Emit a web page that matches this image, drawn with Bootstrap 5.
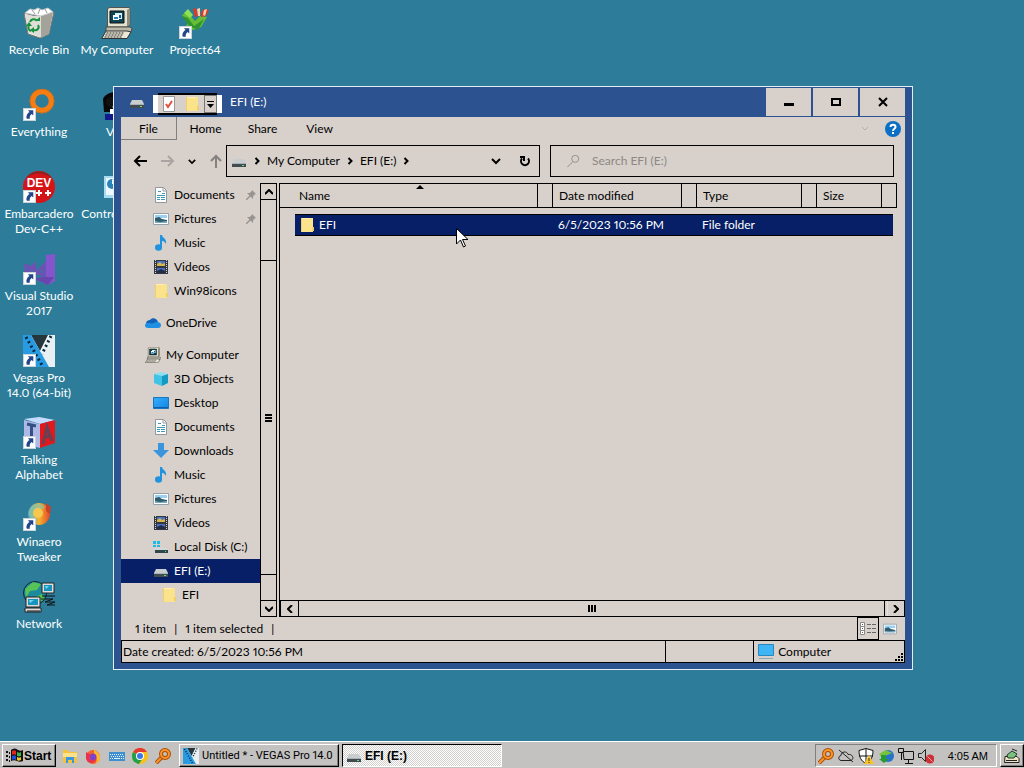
<!DOCTYPE html>
<html lang="en">
<head>
<meta charset="utf-8">
<meta name="viewport" content="width=device-width, initial-scale=1">
<title>EFI (E:)</title>
<link href="https://cdn.jsdelivr.net/npm/bootstrap@5.3.0/dist/css/bootstrap.min.css" rel="stylesheet">
<style>
:root{--face:#d7d0cb;--frame:#2d5290;--sel:#071f67;--ui:Lato,"Open Sans",sans-serif;--bar:"Liberation Sans",Arial,sans-serif}
body{font-family:var(--ui);font-size:12px;line-height:16px;font-variant-numeric:proportional-nums;color:#000;background:#2d7d9a}
svg{display:block;flex:none}
button,input{font:inherit;color:inherit;border-radius:0}
button{background:none;border:0;padding:0}
a{color:inherit;text-decoration:none}
.i16{width:16px;height:16px}.i32{width:32px;height:32px}
.desk-col{width:78px}
.desk-item{height:82px;padding-top:7px;color:#fff;line-height:15px}
.desk-item span{margin-top:3px;white-space:nowrap}
.explorer{left:113px;right:111px;top:86px;bottom:98px;background:var(--frame);border:1px solid #e3eef3;padding:0 7px 6px}
.desk{height:100vh}
.title-row{height:30px;color:#fff}
.caps{gap:2px;padding-top:1px}
.quick{background:linear-gradient(#fff,#fff) center/100% 18px no-repeat;padding:0 5px;margin-left:8px}
.quick-in{height:22px;background:#000;padding:2px 0;color:#000}
.quick-in button{height:18px;background:var(--face)}
.quick-in .drop{border:1px solid #777;width:13px}
.cap{height:28px;width:45px;background:var(--face);color:#000}
.face{background:var(--face)}
.tabs{height:24px}
.tabs>button{height:24px;width:57px}
.tabs>.file{height:23px;width:56px;padding-top:1px;border:solid #808080;border-width:0 1px 1px 0}
.boxed{border:1px solid #000;height:32px}
.nav-row{padding:4px 11px 6px 0}
.steps{width:105px}
.addr{flex:304 1 0;gap:6px}.find{flex:326 1 0;margin-left:10px}
.find input{background:none;border:0;outline:0;padding:0;min-width:0}
.find input::placeholder{color:#8d8885;opacity:1}
.pane{width:139px;flex:none;overflow:hidden}
.pane a{height:24px;gap:5px;padding-left:32px;white-space:nowrap}
.pane a.top{padding-left:24px}
.pane a.sub{padding-left:40px}
.pane a.on,.files tbody .on td{background:var(--sel);color:#fff}
.vbar{width:17px;flex:none;border:1px solid #000}
.vbar button{height:16px}
.vthumb{margin-top:60px;margin-bottom:25px;border:solid #000;border-width:1px 0}
.vbar .up{border-bottom:1px solid #000}.vbar .down{border-top:1px solid #000}
.listing{border-left:1px solid #000;margin-left:2px}
.files{table-layout:fixed;border-collapse:separate;border-spacing:0}
.files th{height:25px;font-weight:400;padding:0 0 0 6px;border:solid #000;border-width:1px 0}
.files th.g,.files th.l{border-left-width:1px}
.files th.e{border-right-width:1px;padding:0}
.files .air td{height:6px;padding:0}
.files .on td{height:22px;padding:0 0 0 6px;border:solid #000;border-width:1px 0}
.files tbody tr.on td.bare{background:none;border:0;padding:0}
.hbar{height:17px;border:1px solid #000}
.hbar button{width:17px}
.hthumb{border:solid #000;border-width:0 1px;margin-right:2px}
.status{height:23px;padding-left:14px}
.view{width:22px;height:23px}.view.on{border:1px solid #000}
.foot{height:23px;border:1px solid #000}
.foot>div{border-left:1px solid #000}
.foot>div:first-child{border:0;padding-left:1px}
.taskbar{height:27px;background:#c3c2c1;border-top:1px solid #fff;font-family:var(--bar);font-size:11px;padding:2px 0 1px 2px}
.raised{border:1px solid;border-color:#fff #000 #000 #fff;box-shadow:inset -1px -1px #808080}
.sunk{border:1px solid;border-color:#808080 #fff #fff #808080}
.start{width:54px;font-size:12px;padding-left:3px;gap:1px}
.launch{width:117px;margin-left:2px}
.task{width:160px;gap:3px;padding-left:3px;white-space:nowrap;overflow:hidden}
.task span{font-family:Roboto,var(--bar)}
.task.active{margin-left:3px;border:1px solid;border-color:#000 #fff #fff #000;background:repeating-conic-gradient(#fff 0 25%,#d0cfce 0 50%) 0 0/2px 2px;font-size:12px}
.tray{width:182px;gap:4px;padding-left:2px}
.show-desk{width:24px;margin-left:3px}
.pointer{left:456px;top:228px}
</style>
</head>
<body>
<svg width="0" height="0" class="position-absolute" aria-hidden="true">
<defs>
<linearGradient id="gs" x1="0" y1="0" x2="1" y2="1"><stop offset="0" stop-color="#31b0ff"/><stop offset="1" stop-color="#1684e0"/></linearGradient>
<linearGradient id="gw" x1="0" y1="0" x2="1" y2="0"><stop offset="0" stop-color="#42a5d8"/><stop offset=".5" stop-color="#f5b52c"/><stop offset="1" stop-color="#e2452a"/></linearGradient>
<symbol id="link" viewBox="0 0 12 12"><path fill="#fff" stroke="#c9d3da" d="M.5.5h11v11H.5z"/><path fill="#23458c" d="M4.500 2h5v5L8 5.500C6.500 6.500 6 8 6.300 10H3.500C2.500 7.500 4 5 6 3.700z"/></symbol>
<symbol id="bin" viewBox="0 0 32 32"><path fill="#efefea" stroke="#77776f" d="M1 6l10 3 20-4-5 22-9 4-12-4z"/><path fill="#a3a29b" d="M18 9l12-4-4 22-8 4z"/><path fill="#deded8" d="M2 7l9 2 7 0 0 21-12-4z"/><path fill="#fff" stroke="#c5c5c5" d="M2 6l5-4 4 1 4-2 4 2 6-2 5 4-12 4z"/><path d="M9 3l3 4M17 2l-2 5M22 2l2 4" stroke="#999"/><path fill="none" stroke="#16913a" stroke-width="2" d="M7 15c1-3 5-4 7-1M15 18c2 3-1 6-4 5M8 24c-3-1-3-4-2-6"/><path fill="#16913a" d="M12 14h5v-4zM11 20v6l-4-3zM3 19l3-4 3 4z"/></symbol>
<symbol id="pc" viewBox="0 0 32 32"><path fill="#e6e2d2" stroke="#56544c" d="M6.500 1.500L9 .5h19l1 2v15l-3 2.500H6.500z"/><path fill="#8f8c7e" d="M26 3l3-2v16l-3 3z"/><path fill="#0b4554" stroke="#111" d="M9 4h14v12H9z"/><path fill="#d6f2f2" d="M14 6h7v6h-7z"/><path fill="#1a5f9d" d="M15 8h5v3h-5z"/><path fill="#fff" d="M12 8h6v5h-6z"/><path fill="#2c7fbd" d="M13 10h4v2h-4z"/><path fill="#bdb9aa" stroke="#4d4b44" d="M5 20h24l2 1-1 4H5z"/><path fill="#ece8d8" stroke="#333" d="M5 24h21l4 1-4 6.500H.8z"/><path d="M5.500 26h18M4.500 28h18M3.500 30h18" stroke="#222" stroke-dasharray="2 1"/></symbol>
<symbol id="p64" viewBox="0 0 32 32"><path fill="#69bd32" d="M3 8l5-3 8 9 5-5 7 1-6 10-8 3-7-4 2-3z"/><path fill="#2f962f" d="M3 9l6 2 6 8 10-7-6 11-9-4z"/><path fill="#8fe055" d="M5 6l4-4 5 6-3 3z"/><path fill="#dd3a26" d="M14 2l3-1 2 8-3 1zM22 5l3-3 5 1-3 6-5 1z"/><path fill="#f5d3b2" d="M18 2l3-1v8h-2zM25 3l3-1-2 7-2-1z"/></symbol>
<symbol id="ring" viewBox="0 0 32 32"><circle cx="19" cy="12" r="9.500" fill="none" stroke="#f57d12" stroke-width="5.500"/><circle cx="19" cy="12" r="12" fill="none" stroke="#c96d20"/></symbol>
<symbol id="dev" viewBox="0 0 32 32"><circle cx="16" cy="16" r="16" fill="#d41416"/><path d="M3 7A16 16 0 0 1 29 7C20 1 11 1 3 7z" fill="#8e2222"/><path d="M13 22h6M16 19v6M22 22h6M25 19v6" stroke="#fff" stroke-width="2"/><text x="16" y="16" fill="#fff" text-anchor="middle" font-family="Liberation Sans" font-weight="700" font-size="12">DEV</text></symbol>
<symbol id="vs" viewBox="0 0 32 32"><path fill="#8655cd" d="M23 2l9-1v27l-7 4-15-7 13 1z"/><path fill="none" stroke="#7150b6" stroke-width="3" d="M3 11v11l8-10 2 9 8-9v11L3 12"/><path fill="#6946ad" d="M23 24h8l-6 8-15-7z"/></symbol>
<symbol id="vegas" viewBox="0 0 32 32"><path fill="#fff" d="M0 0h32v32H0z"/><path fill="#25363c" d="M8 0h17l-8 16z"/><path fill="#e8f0f3" d="M32 3v29H22l-4-15L26 0h6z"/><path fill="#299be3" d="M0 0h8l18 32H0z"/><path stroke="#06283b" stroke-width="3" stroke-dasharray="2 3" d="M3 2l17 30M28 1l-9 18"/></symbol>
<symbol id="alpha" viewBox="0 0 32 32"><path fill="#c6dcff" d="M1 2l15-2 16 3-15 4z"/><path fill="#aeb9e8" d="M1 3l16 4v24L1 27z"/><path fill="#e1191c" d="M17 7l15-4v23l-15 5z"/><path fill="none" stroke="#345085" stroke-width="3" d="M4 7l9 2M8.500 8v11"/><path fill="none" stroke="#674054" stroke-width="3" d="M20 27l4-17 5 14M22 20l5-1"/></symbol>
<symbol id="win" viewBox="0 0 32 32"><circle cx="16" cy="15" r="11" fill="url(#gw)"/><path fill="#8bc5a6" opacity=".7" d="M6 12c3-9 14-9 16-3-6 1-10 5-12 12-4-3-5-6-4-9z"/><circle cx="15" cy="14" r="5" fill="#f6c850"/><path d="M23 4l5 4-1 7-4-3z" fill="#c8412b"/></symbol>
<symbol id="net" viewBox="0 0 32 32"><circle cx="12" cy="12" r="11.500" fill="#1b8b9d" stroke="#123"/><path fill="#57c255" d="M2 8l8-7 8 2-4 6-7 1-4 7zM12 16l7-3 3 5-7 4z"/><path fill="#ddd" stroke="#222" d="M19 2h12v10H19zM3 16h14v10H3zM2 27h16v4H2z"/><path fill="#1694bd" d="M21 4h8v6h-8zM5 18h10v6H5z"/><path fill="#70d7ea" d="M22 5h4l-3 3zM6 19h5l-4 3z"/><path stroke="#111" d="M19 15h13M18 18h12l-8 3h10l-8 3h8M4 30h13" fill="none"/></symbol>
<symbol id="face" viewBox="0 0 32 32"><path fill="#080808" d="M2 10C6 1 22 1 27 9v14H3z"/><path fill="#fff" d="M9 13l8-6 10 4v10H13z"/><circle cx="10" cy="13" r="5" fill="#111"/><path fill="#101a8a" d="M4 25h12v6H4z"/><path fill="#fff" d="M9 20h6v5H9z"/></symbol>
<symbol id="ctl" viewBox="0 0 32 32"><path fill="#a9dcf3" d="M3 5h27v22H3z"/><path fill="#eefaff" d="M5 7h24v17H5z"/><circle cx="11" cy="13" r="5" fill="#2b84b9"/><path fill="#e9fbff" d="M11 13V8l5 5z"/></symbol>
<symbol id="drive" viewBox="0 0 16 16"><path fill="#c9cdd0" d="M3 6h10l2 4H1z"/><path fill="#444b50" d="M1 10h14v4H1z"/><path fill="#a8b3b7" d="M1 10h14v1H1z"/><path fill="#5fe082" d="M11 12h2v1h-2z"/></symbol>
<symbol id="folder" viewBox="0 0 16 16"><path fill="#fbe38c" d="M2 1h12v14H2z"/><path fill="#f0cf69" d="M2 1h1v14H2zM13 10h2v4h-2z"/><path fill="#ffeeb0" d="M3 1h8v1H3z"/></symbol>
<symbol id="doc" viewBox="0 0 16 16"><path fill="#fff" stroke="#8d999d" d="M2.500.5h8l3 3v12h-11z"/><path d="M5 4.500h3M9 6.500h3M4 8.500h8M4 10.500h3M8 10.500h4M4 12.500h3M8 12.500h4" stroke="#3b9bb9"/><path d="M10 1v3h3" fill="none" stroke="#999"/></symbol>
<symbol id="pic" viewBox="0 0 16 16"><path fill="#fff" stroke="#94a2aa" d="M.5 2.500h15v11H.5z"/><path fill="#9bd1ef" d="M2 4h12v3H2z"/><path fill="#315b6f" d="M2 7l4-1 3 2 5 1v2H2z"/><path fill="#7baabd" d="M2 10l5 1 7-1v2H2z"/></symbol>
<symbol id="music" viewBox="0 0 16 16"><ellipse cx="5.500" cy="12.500" rx="3.500" ry="3.200" fill="#1f93e0"/><path fill="#1f93e0" d="M7 0h2c0 3 5 3 4 9-1-2-2-3-4-3v7H7z"/></symbol>
<symbol id="video" viewBox="0 0 16 16"><path fill="#33373e" d="M1 1h14v14H1z"/><path stroke="#d3d3d3" stroke-dasharray="1 1" d="M2.500 1v14M13.500 1v14"/><path fill="#4873c4" d="M4 2h8v5H4zM4 9h8v5H4z"/><path fill="#d8b74a" d="M4 5l3-2 2 2 3-1v3H4z"/><path fill="#222b48" d="M4 12l4-2 4 2v2H4z"/></symbol>
<symbol id="cloud" viewBox="0 0 16 16"><path fill="#0f62b8" d="M1 9c0-3 2-4 4-4 2-3 7-2 8 2l-3 3z"/><path fill="#1f8fe3" d="M3 13c-4 0-4-5 0-5 3 0 4 1 6 0 3-2 7-.5 7 2 0 2-1 3-3 3z"/></symbol>
<symbol id="cube" viewBox="0 0 16 16"><path fill="#88e0f2" d="M1 3l7-2 7 2-6 2z"/><path fill="#40c3e4" d="M1 3l8 2v10l-8-3z"/><path fill="#149bc4" d="M9 5l6-2v9l-6 3z"/></symbol>
<symbol id="screen" viewBox="0 0 16 16"><path fill="url(#gs)" stroke="#1a76bf" d="M.5 2.500h15v11H.5z"/><path fill="#0e5da8" d="M1 12h14v1H1z"/></symbol>
<symbol id="down" viewBox="0 0 16 16"><path fill="#3a95dd" d="M5 0h6v7h5l-8 8-8-8h5z"/></symbol>
<symbol id="disk" viewBox="0 0 16 16"><path fill="#1dbbe5" d="M0 2h3v3H0zM4 2h3v3H4zM0 6h3v2H0zM4 6h3v2H4z"/><path fill="#d5d8d8" d="M3 9h10l2 2H2z"/><path fill="#30464c" d="M2 11h13v3H2z"/><path fill="#5fe082" d="M12 12h1v1h-1z"/></symbol>
<symbol id="pin" viewBox="0 0 10 10"><path fill="#979390" d="M6 0l4 4-1.500.5-1.500 2V9L4.500 6.500 1 10H0V9l3.500-3.500L1 3h2.500l2-1.500z"/></symbol>
<symbol id="chev" viewBox="0 0 8 8"><path fill="none" stroke="currentColor" stroke-width="2" d="M2.500 1l3 3-3 3"/></symbol>
<symbol id="chevd" viewBox="0 0 10 8"><path fill="none" stroke="currentColor" stroke-width="2" d="M1 2l4 4 4-4"/></symbol>
<symbol id="arrow" viewBox="0 0 14 12"><path fill="none" stroke="currentColor" stroke-width="2" d="M14 6H2M7 1L2 6l5 5"/></symbol>
<symbol id="mag" viewBox="0 0 16 16"><path stroke="#ac4d05" stroke-width="4" d="M7 9l-6 6"/><path stroke="#f8962c" stroke-width="2" d="M7 9l-6 6"/><circle cx="10" cy="6" r="4" fill="none" stroke="#ac4d05" stroke-width="4"/><circle cx="10" cy="6" r="4" fill="none" stroke="#f8962c" stroke-width="2"/></symbol>
</defs>
</svg>

<main class="desk d-flex flex-column position-relative overflow-hidden">
<div class="flex-grow-1 d-flex overflow-hidden">
  <div class="desk-col">
    <a href="#" class="desk-item d-flex flex-column align-items-center text-center"><svg class="i32"><use href="#bin"/></svg><span>Recycle Bin</span></a>
    <a href="#" class="desk-item d-flex flex-column align-items-center text-center"><svg class="i32"><use href="#ring"/><use href="#link" y="19" width="13" height="13"/></svg><span>Everything</span></a>
    <a href="#" class="desk-item d-flex flex-column align-items-center text-center"><svg class="i32"><use href="#dev"/><use href="#link" y="19" width="13" height="13"/></svg><span>Embarcadero<br>Dev-C++</span></a>
    <a href="#" class="desk-item d-flex flex-column align-items-center text-center"><svg class="i32"><use href="#vs"/><use href="#link" y="19" width="13" height="13"/></svg><span>Visual Studio<br>2017</span></a>
    <a href="#" class="desk-item d-flex flex-column align-items-center text-center"><svg class="i32"><use href="#vegas"/><use href="#link" y="19" width="13" height="13"/></svg><span>Vegas Pro<br>14.0 (64-bit)</span></a>
    <a href="#" class="desk-item d-flex flex-column align-items-center text-center"><svg class="i32"><use href="#alpha"/><use href="#link" y="19" width="13" height="13"/></svg><span>Talking<br>Alphabet</span></a>
    <a href="#" class="desk-item d-flex flex-column align-items-center text-center"><svg class="i32"><use href="#win"/><use href="#link" y="19" width="13" height="13"/></svg><span>Winaero<br>Tweaker</span></a>
    <a href="#" class="desk-item d-flex flex-column align-items-center text-center"><svg class="i32"><use href="#net"/></svg><span>Network</span></a>
  </div>
  <div class="desk-col">
    <a href="#" class="desk-item d-flex flex-column align-items-center text-center"><svg class="i32"><use href="#pc"/></svg><span>My Computer</span></a>
    <a href="#" class="desk-item d-flex flex-column align-items-center text-center"><svg class="i32"><use href="#face"/></svg><span>VLC</span></a>
    <a href="#" class="desk-item d-flex flex-column align-items-center text-center"><svg class="i32"><use href="#ctl"/></svg><span>Control Panel</span></a>
  </div>
  <div class="desk-col">
    <a href="#" class="desk-item d-flex flex-column align-items-center text-center"><svg class="i32"><use href="#p64"/><use href="#link" y="19" width="13" height="13"/></svg><span>Project64</span></a>
  </div>
</div>

<section class="explorer position-absolute d-flex flex-column" aria-label="EFI (E:)">
  <header class="title-row d-flex">
    <div class="d-flex align-items-center flex-grow-1 ps-2">
      <svg class="i16"><use href="#drive"/></svg>
      <div class="quick d-flex align-items-center mt-1"><div class="quick-in d-flex">
        <button class="px-1" aria-label="Properties"><svg width="14" height="16" viewBox="0 0 14 16"><path fill="#fff" stroke="#999" d="M1.500.5h11v15h-11z"/><path fill="none" stroke="#e0503c" stroke-width="2" d="M4 8l2 3 4-6"/></svg></button>
        <button class="px-1" aria-label="New folder"><svg class="i16"><use href="#folder"/></svg></button>
        <button class="drop face" aria-label="Customize toolbar"><svg width="11" height="14" viewBox="0 0 11 14"><path d="M2 4h7v1H2zM2 7h7l-3.500 4z"/></svg></button>
      </div></div>
      <span class="ms-2">EFI (E:)</span>
    </div>
    <div class="caps d-flex">
      <button class="cap" aria-label="Minimize"><svg class="mx-auto" width="12" height="12" viewBox="0 0 12 12"><path d="M1 7h10v3H1z"/></svg></button>
      <button class="cap" aria-label="Maximize"><svg class="mx-auto" width="12" height="12" viewBox="0 0 12 12"><path fill="none" stroke="#000" stroke-width="2" d="M2 3h8v6H2z"/></svg></button>
      <button class="cap" aria-label="Close"><svg class="mx-auto" width="12" height="12" viewBox="0 0 12 12"><path stroke="#000" stroke-width="2" d="M2 2l8 8M10 2l-8 8"/></svg></button>
    </div>
  </header>

  <div class="face flex-grow-1 d-flex flex-column overflow-hidden">
    <nav class="tabs d-flex align-items-start">
      <button class="file">File</button><button>Home</button><button>Share</button><button>View</button>
      <div class="ms-auto d-flex align-items-center gap-3 h-100 pe-1">
        <svg width="8" height="6" viewBox="0 0 8 6"><path fill="none" stroke="#b5afab" d="M1 1l3 3 3-3"/></svg>
        <button aria-label="Help"><svg class="i16" viewBox="0 0 16 16"><circle cx="8" cy="8" r="8" fill="#0b6fc6"/><path fill="none" stroke="#fff" stroke-width="2" d="M5.500 6c0-3 5-3 5 0 0 2-2.500 1.500-2.500 4M8 11v2"/></svg></button>
      </div>
    </nav>

    <div class="nav-row d-flex align-items-center">
      <div class="steps d-flex align-items-center justify-content-between ps-2 pe-1">
        <button class="ms-1" aria-label="Back"><svg width="14" height="12"><use href="#arrow"/></svg></button>
        <button aria-label="Forward"><svg width="14" height="12" viewBox="0 0 14 12"><path fill="none" stroke="#aaa5a2" stroke-width="2" d="M0 6h12M7 1l5 5-5 5"/></svg></button>
        <button aria-label="Recent locations"><svg width="8" height="7"><use href="#chevd"/></svg></button>
        <button aria-label="Up"><svg width="12" height="14" viewBox="0 0 12 14"><path fill="none" stroke="#858180" stroke-width="2" d="M6 14V2M1 7l5-5 5 5"/></svg></button>
      </div>
      <div class="addr boxed d-flex align-items-center px-1">
        <svg class="i16"><use href="#drive"/></svg><svg width="8" height="8"><use href="#chev"/></svg>
        <a href="#">My Computer</a><svg width="8" height="8"><use href="#chev"/></svg>
        <a href="#">EFI (E:)</a><svg width="8" height="8"><use href="#chev"/></svg>
        <button class="ms-auto me-2" aria-label="Previous locations"><svg width="10" height="8"><use href="#chevd"/></svg></button>
        <button class="mx-1" aria-label="Refresh"><svg width="12" height="12" viewBox="0 0 12 12"><path fill="none" stroke="#000" stroke-width="2" d="M3 3.500a4 4 0 1 0 6 0M1 2h4v4"/></svg></button>
      </div>
      <label class="find boxed d-flex align-items-center ps-3 gap-2">
        <svg width="13" height="14" viewBox="0 0 14 16"><path fill="none" stroke="#8d8885" d="M6 9l-6 6M13 5.500a4 4 0 1 1-8 0 4 4 0 0 1 8 0z"/></svg>
        <input class="flex-grow-1 ms-1" type="text" placeholder="Search EFI (E:)" aria-label="Search EFI (E:)">
      </label>
    </div>

    <div class="flex-grow-1 d-flex overflow-hidden">
      <nav class="pane">
        <a href="#" class="d-flex align-items-center"><svg class="i16"><use href="#doc"/></svg>Documents<svg class="ms-auto me-1" width="10" height="10"><use href="#pin"/></svg></a>
        <a href="#" class="d-flex align-items-center"><svg class="i16"><use href="#pic"/></svg>Pictures<svg class="ms-auto me-1" width="10" height="10"><use href="#pin"/></svg></a>
        <a href="#" class="d-flex align-items-center"><svg class="i16"><use href="#music"/></svg>Music</a>
        <a href="#" class="d-flex align-items-center"><svg class="i16"><use href="#video"/></svg>Videos</a>
        <a href="#" class="d-flex align-items-center"><svg class="i16"><use href="#folder"/></svg>Win98icons</a>
        <a href="#" class="top my-2 d-flex align-items-center"><svg class="i16"><use href="#cloud"/></svg>OneDrive</a>
        <a href="#" class="top d-flex align-items-center"><svg class="i16"><use href="#pc"/></svg>My Computer</a>
        <a href="#" class="d-flex align-items-center"><svg class="i16"><use href="#cube"/></svg>3D Objects</a>
        <a href="#" class="d-flex align-items-center"><svg class="i16"><use href="#screen"/></svg>Desktop</a>
        <a href="#" class="d-flex align-items-center"><svg class="i16"><use href="#doc"/></svg>Documents</a>
        <a href="#" class="d-flex align-items-center"><svg class="i16"><use href="#down"/></svg>Downloads</a>
        <a href="#" class="d-flex align-items-center"><svg class="i16"><use href="#music"/></svg>Music</a>
        <a href="#" class="d-flex align-items-center"><svg class="i16"><use href="#pic"/></svg>Pictures</a>
        <a href="#" class="d-flex align-items-center"><svg class="i16"><use href="#video"/></svg>Videos</a>
        <a href="#" class="d-flex align-items-center"><svg class="i16"><use href="#disk"/></svg>Local Disk (C:)</a>
        <a href="#" class="on d-flex align-items-center"><svg class="i16"><use href="#drive"/></svg>EFI (E:)</a>
        <a href="#" class="sub d-flex align-items-center"><svg class="i16"><use href="#folder"/></svg>EFI</a>
      </nav>
      <div class="vbar d-flex flex-column">
        <button class="up d-flex align-items-center justify-content-center" aria-label="Scroll up"><svg width="8" height="6" viewBox="0 0 8 6"><path fill="none" stroke="#000" stroke-width="2" d="M0 5l4-4 4 4"/></svg></button>
        <div class="vthumb flex-grow-1 d-flex align-items-center justify-content-center"><svg width="7" height="8" viewBox="0 0 7 8"><path d="M0 0h7v2H0zM0 3h7v2H0zM0 6h7v2H0z"/></svg></div>
        <button class="down d-flex align-items-center justify-content-center" aria-label="Scroll down"><svg width="8" height="6" viewBox="0 0 8 6"><path fill="none" stroke="#000" stroke-width="2" d="M0 1l4 4 4-4"/></svg></button>
      </div>
      <div class="listing flex-grow-1 d-flex flex-column">
        <div class="flex-grow-1 pe-2">
          <table class="files w-100">
            <colgroup><col style="width:15px"><col><col style="width:15px"><col style="width:129px"><col style="width:15px"><col style="width:105px"><col style="width:15px"><col style="width:65px"><col style="width:12px"><col style="width:4px"></colgroup>
            <thead><tr><th class="p-0"></th><th class="position-relative ps-1">Name<svg class="position-absolute top-0 start-50" width="8" height="5" viewBox="0 0 8 5"><path d="M0 5l4-4 4 4z"/></svg></th><th class="g"></th><th class="l">Date modified</th><th class="g"></th><th class="l">Type</th><th class="g"></th><th class="l">Size</th><th class="g"></th><th class="e"></th></tr></thead>
            <tbody><tr class="air"><td colspan="10"></td></tr>
            <tr class="on"><td class="bare"></td><td class="ps-1"><div class="d-flex align-items-center gap-1"><svg class="i16"><use href="#folder"/></svg>EFI</div></td><td></td><td>6/5/2023 10:56 PM</td><td></td><td>File folder</td><td></td><td></td><td></td><td class="bare"></td></tr></tbody>
          </table>
        </div>
        <div class="hbar d-flex">
          <button class="d-flex align-items-center justify-content-center" aria-label="Scroll left"><svg width="6" height="8" viewBox="0 0 6 8"><path fill="none" stroke="#000" stroke-width="2" d="M5 0L1 4l4 4"/></svg></button>
          <div class="hthumb flex-grow-1 d-flex align-items-center justify-content-center"><svg width="8" height="7" viewBox="0 0 8 7"><path d="M0 0h2v7H0zM3 0h2v7H3zM6 0h2v7H6z"/></svg></div>
          <button class="border-start border-black d-flex align-items-center justify-content-center" aria-label="Scroll right"><svg width="6" height="8" viewBox="0 0 6 8"><path fill="none" stroke="#000" stroke-width="2" d="M1 0l4 4-4 4"/></svg></button>
        </div>
      </div>
    </div>

    <div class="status d-flex align-items-center">
      <span>1 item</span><span class="mx-2">|</span><span>1 item selected</span><span class="ms-2">|</span>
      <button class="view on ms-auto d-flex align-items-center justify-content-center" aria-label="Details view"><svg class="i16" viewBox="0 0 16 16"><path fill="#fff" stroke="#888" d="M.5 1.500h4v4h-4zM.5 5.500h4v4h-4zM.5 9.500h4v4h-4z"/><path stroke="#666" stroke-dasharray="4 1" d="M7 3.500h9M7 7.500h9M7 11.500h9"/><path fill="#555" d="M2 3h1v1H2zM2 7h1v1H2zM2 11h1v1H2z"/></svg></button>
      <button class="view me-1 d-flex align-items-center justify-content-center" aria-label="Large icons view"><svg width="14" height="14"><use href="#pic"/></svg></button>
    </div>
    <footer class="foot d-flex position-relative">
      <div class="d-flex align-items-center" style="flex:543">Date created: 6/5/2023 10:56 PM</div><div style="flex:87"></div>
      <div class="d-flex align-items-center gap-1 ps-1" style="flex:146"><svg width="16" height="16" viewBox="0 0 16 16"><path fill="#3eb5f5" stroke="#2a86be" d="M.5.5h15v11H.5z"/><path stroke="#8caabd" d="M1 14.500h14"/></svg>Computer</div>
      <svg class="position-absolute bottom-0 end-0" width="9" height="9" viewBox="0 0 9 9"><path d="M6 0h2v2H6zM3 3h2v2H3zM6 3h2v2H6zM0 6h2v2H0zM3 6h2v2H3zM6 6h2v2H6z"/></svg>
    </footer>
  </div>
</section>

<svg class="pointer position-absolute" width="12" height="20" viewBox="0 0 12 20" aria-hidden="true"><path fill="#fff" stroke="#000" d="M.5.500v15.500l4-4 3 7 2-1-3-6.500h5.500z"/></svg>

<footer class="taskbar d-flex position-relative">
  <button class="start raised d-flex align-items-center fw-bold"><svg width="17" height="15" viewBox="0 0 17 15"><path fill="#111" d="M5 2c3-2 5-2 7 0 2 1 3 1 5 0v11c-2 1-4 1-6 0-2-1-4-1-6 0zM0 3h2v2H0zM3 4h1v2H3zM0 7h2v2H0zM3 8h1v2H3zM0 11h2v2H0zM3 12h1v2H3z"/><path fill="#e3261b" d="M6 3c2-1 3-1 4 0v4c-2-1-3-1-4 0z"/><path fill="#3bb44a" d="M11 4c2 1 3 1 4 0v4c-2 1-3 0-4 0z"/><path fill="#234fd2" d="M6 8c2-1 3-1 4 0v4c-2-1-3-1-4 0z"/><path fill="#f3cb22" d="M11 9c2 1 3 1 4 0v3c-2 1-3 1-4 0z"/></svg>Start</button>
  <div class="launch d-flex align-items-center justify-content-between px-1">
    <button aria-label="File Explorer"><svg class="i16" viewBox="0 0 16 16"><path fill="#f5c33b" d="M1 2h5l1 2h8v11H1z"/><path fill="#fde28a" d="M1 5h14v4H1z"/><path fill="#3b97df" d="M4 9h8v6h-2v-3H6v3H4z"/></svg></button>
    <button aria-label="Firefox"><svg class="i16" viewBox="0 0 16 16"><circle cx="8" cy="9" r="7" fill="#f4622b"/><path fill="#fcb72e" d="M9 0c1 4 7 4 6 11-1 3-3 4-5 5 3-4 2-7-1-9z"/><circle cx="8" cy="9" r="3.500" fill="#8042ca"/><path fill="#e9304e" d="M1 4l3 2c3 0 2 2 0 3 1 4 5 4 7 2-1 6-10 5-10-2z"/></svg></button>
    <button aria-label="Keyboard"><svg class="i16" viewBox="0 0 16 16"><path fill="#3e8ed0" d="M0 4h16v9H0z"/><path stroke="#e2f3ff" stroke-dasharray="1 1" d="M1 6.500h14M2 8.500h13M1 10.500h3M12 10.500h3"/><path stroke="#e2f3ff" d="M5 10.500h6"/></svg></button>
    <button aria-label="Chrome"><svg class="i16" viewBox="0 0 16 16"><circle cx="8" cy="8" r="8" fill="#fbc116"/><path fill="#e33b2e" d="M8 8L1 4a8 8 0 0 1 14 0H8z"/><path fill="#24a148" d="M8 8L1 4a8 8 0 0 0 6 12l4-6z"/><circle cx="8" cy="8" r="4" fill="#fff"/><circle cx="8" cy="8" r="3" fill="#3b78e7"/></svg></button>
    <button aria-label="Everything"><svg class="i16"><use href="#mag"/></svg></button>
  </div>
  <button class="task raised d-flex align-items-center ms-1"><svg class="i16" viewBox="0 0 32 32"><use href="#vegas"/></svg><span>Untitled * - VEGAS Pro 14.0</span></button>
  <button class="task active d-flex align-items-center fw-bold"><svg class="i16"><use href="#drive"/></svg>EFI (E:)</button>
  <div class="tray sunk d-flex align-items-center ms-auto">
    <svg class="i16"><use href="#mag"/></svg>
    <svg class="i16" viewBox="0 0 16 16"><path fill="none" stroke="#222" d="M3 12.500C0 12 0 8 3 7.500c0-4 6-5 7-1 4-1 7 4 3 6zM1 2l14 12"/></svg>
    <svg class="i16" viewBox="0 0 16 16"><path fill="#fff" stroke="#111" d="M8 .5l7 2C15 9 13 13 8 15.500 3 13 1 9 1 2.500z"/><path stroke="#111" d="M8 1v14M1 8h14"/><path fill="#f8c326" d="M11 7l5 9H6z"/><path stroke="#333" d="M11 10v3M11 14v1"/></svg>
    <svg class="i16" viewBox="0 0 16 16"><circle cx="10" cy="8" r="6" fill="#2873c7"/><path fill="#79c33c" d="M1 6l7-4 6 3-7 3v5z"/><path fill="#269b35" d="M3 7h5v4h3l-5 4-5-4h2z"/></svg>
    <svg class="i16" viewBox="0 0 16 16"><path fill="none" stroke="#111" d="M5 3.500h10.500v8H6zM10.500 12v3M7 15.500h8M.5.500h5v4h-5zM3.500 5v7"/></svg>
    <svg class="i16" viewBox="0 0 16 16"><path fill="none" stroke="#222" d="M.5 5.500h3l4-4v12l-4-4h-3z"/><circle cx="12" cy="11" r="4.500" fill="#cf3036"/><path stroke="#fff" stroke-opacity=".6" d="M9.500 8.500l5 5"/></svg>
    <span class="ms-auto me-2">4:05 AM</span>
  </div>
  <button class="show-desk raised d-flex align-items-center justify-content-center" aria-label="Show desktop"><svg class="i16" viewBox="0 0 16 16"><path fill="#f2e6c8" stroke="#222" d="M1 8.500h12l2 2v4H.5z"/><path fill="#7fc080" stroke="#183f28" d="M3 7l5-4 5 3-3 4H4z"/><path stroke="#222" d="M8 1l5 2M2 12.500h11"/></svg></button>
</footer>
</main>
<script src="https://cdn.jsdelivr.net/npm/bootstrap@5.3.0/dist/js/bootstrap.bundle.min.js"></script>
</body>
</html>
